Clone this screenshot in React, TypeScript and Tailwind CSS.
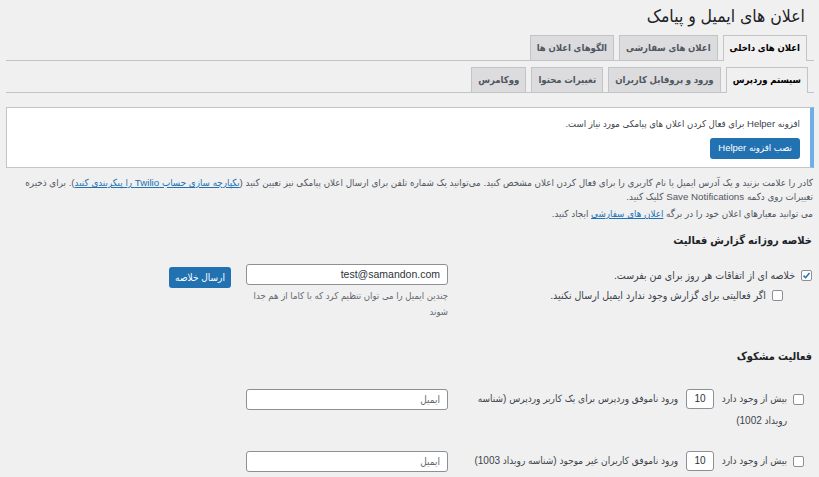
const FONT = "font-['Liberation_Sans','DejaVu_Sans',sans-serif] font-stretch-condensed";

function Tab({ label, active }: { label: string; active?: boolean }) {
  return (
    <div
      className={
        'flex h-[25px] items-center border border-b-0 border-[#c3c4c7] px-[6px] text-[9.5px] font-bold ' +
        (active ? '-mb-px h-[26px] bg-[#f0f0f1] pb-px text-[#000]' : 'bg-[#dcdcde] text-[#50575e]')
      }
    >
      {label}
    </div>
  );
}

function Checkbox({ checked }: { checked?: boolean }) {
  return (
    <span className="flex h-[11px] w-[11px] shrink-0 items-center justify-center rounded-[2px] border border-[#8c8f94] bg-white">
      {checked && (
        <svg viewBox="0 0 12 12" className="h-[9px] w-[9px]">
          <path d="M2 6.2 L4.8 9 L10 2.8" fill="none" stroke="#2271b1" strokeWidth="2" />
        </svg>
      )}
    </span>
  );
}

function NumberBox() {
  return (
    <span className="mx-[5px] inline-flex h-[20px] w-[28px] items-center justify-center rounded-[3px] border border-[#8c8f94] bg-white align-middle text-[10px] text-[#2c3338]">
      10
    </span>
  );
}

function EmailInput({ value }: { value?: string }) {
  return (
    <div className="flex h-[21px] w-[202px] items-center rounded-[3px] border border-[#8c8f94] bg-white px-[7px] text-[10.5px]">
      {value ? (
        <span className="text-[#2c3338]" dir="ltr">
          {value}
        </span>
      ) : (
        <span className="text-[10px] text-[#646970]">ایمیل</span>
      )}
    </div>
  );
}

export default function App() {
  return (
    <div dir="rtl" className={'h-[477px] w-[819px] overflow-hidden bg-[#f0f0f1] text-[#3c434a] ' + FONT}>
      <div className="ml-[6px] mr-[5px]">
        <h1 className="pr-[9px] pt-[5px] text-[17.5px] leading-[22px] text-[#1d2327]">اعلان های ایمیل و پیامک</h1>

        <div className="mt-[8px] flex gap-[5px] border-b border-[#c3c4c7] pr-[7px]">
          <Tab label="اعلان های داخلی" active />
          <Tab label="اعلان های سفارشی" />
          <Tab label="الگوهای اعلان ها" />
        </div>

        <div className="mt-[6px] flex gap-[5px] border-b border-[#c3c4c7] pr-[6px]">
          <Tab label="سیستم وردپرس" active />
          <Tab label="ورود و پروفایل کاربران" />
          <Tab label="تغییرات محتوا" />
          <Tab label="ووکامرس" />
        </div>

        <div className="mt-[14px] h-[61px] border border-r-4 border-[#c3c4c7] border-r-[#72aee6] bg-white pr-[10px] pt-[9px]">
          <p className="text-[9.5px] leading-[14px] text-[#3c434a]">
            افزونه Helper برای فعال کردن اعلان های پیامکی مورد نیاز است.
          </p>
          <button className="mt-[7px] h-[21px] rounded-[3px] bg-[#2271b1] px-[8px] text-[9.5px] text-white">
            نصب افزونه Helper
          </button>
        </div>

        <p className="mt-[8px] pr-px text-[9.75px] leading-[14px] text-[#50575e]">
          کادر را علامت بزنید و یک آدرس ایمیل یا نام کاربری را برای فعال کردن اعلان مشخص کنید. می‌توانید یک شماره تلفن برای ارسال اعلان پیامکی نیز تعیین کنید (
          <span className="text-[#2271b1] underline">یکپارچه سازی حساب Twilio را پیکربندی کنید</span>). برای ذخیره
          تغییرات روی دکمه Save Notifications کلیک کنید.
        </p>
        <p className="mt-[3px] pr-px text-[9.75px] leading-[14px] text-[#50575e]">
          می توانید معیارهای اعلان خود را در برگه <span className="text-[#2271b1] underline">اعلان های سفارشی</span>{' '}
          ایجاد کنید.
        </p>

        <h2 className="mt-[11px] pr-[2px] text-[11px] font-bold leading-[16px] text-[#1d2327]">
          خلاصه روزانه گزارش فعالیت
        </h2>

        <div className="mt-[16px] flex">
          <div className="w-[344px] shrink-0 pr-[2px] pt-[4px]">
            <label className="flex items-center gap-[6px] text-[10.5px] leading-[14px]">
              <Checkbox checked />
              خلاصه ای از اتفاقات هر روز برای من بفرست.
            </label>
            <label className="mt-[6px] flex items-center gap-[6px] pr-[29px] text-[10.5px] leading-[14px]">
              <Checkbox />
              اگر فعالیتی برای گزارش وجود ندارد ایمیل ارسال نکنید.
            </label>
          </div>
          <div className="mr-[22px] w-[202px] shrink-0">
            <EmailInput value="test@samandon.com" />
            <p className="mt-[3px] text-[9.5px] leading-[16px] text-[#646970]">
              چندین ایمیل را می توان تنظیم کرد که با کاما از هم جدا شوند
            </p>
          </div>
          <div className="mr-[15px]">
            <button className="h-[21px] w-[62px] rounded-[3px] bg-[#2271b1] text-[10px] text-white">ارسال خلاصه</button>
          </div>
        </div>

        <h2 className="mt-[28px] pr-[2px] text-[11px] font-bold leading-[16px] text-[#1d2327]">فعالیت مشکوک</h2>

        <div className="mt-[25px] flex">
          <div className="flex w-[344px] shrink-0 items-start gap-[6px] pr-[10px]">
            <span className="mt-[5px]">
              <Checkbox />
            </span>
            <p className="-mt-[1px] text-[10px] leading-[22px]">
              بیش از وجود دارد <NumberBox /> ورود ناموفق وردپرس برای یک کاربر وردپرس (شناسه رویداد 1002)
            </p>
          </div>
          <div className="mr-[22px]">
            <EmailInput />
          </div>
        </div>

        <div className="mt-[19px] flex">
          <div className="flex w-[344px] shrink-0 items-start gap-[6px] pr-[10px]">
            <span className="mt-[5px]">
              <Checkbox />
            </span>
            <p className="-mt-[1px] text-[10px] leading-[22px]">
              بیش از وجود دارد <NumberBox /> ورود ناموفق کاربران غیر موجود (شناسه رویداد 1003)
            </p>
          </div>
          <div className="mr-[22px]">
            <EmailInput />
          </div>
        </div>
      </div>
    </div>
  );
}
